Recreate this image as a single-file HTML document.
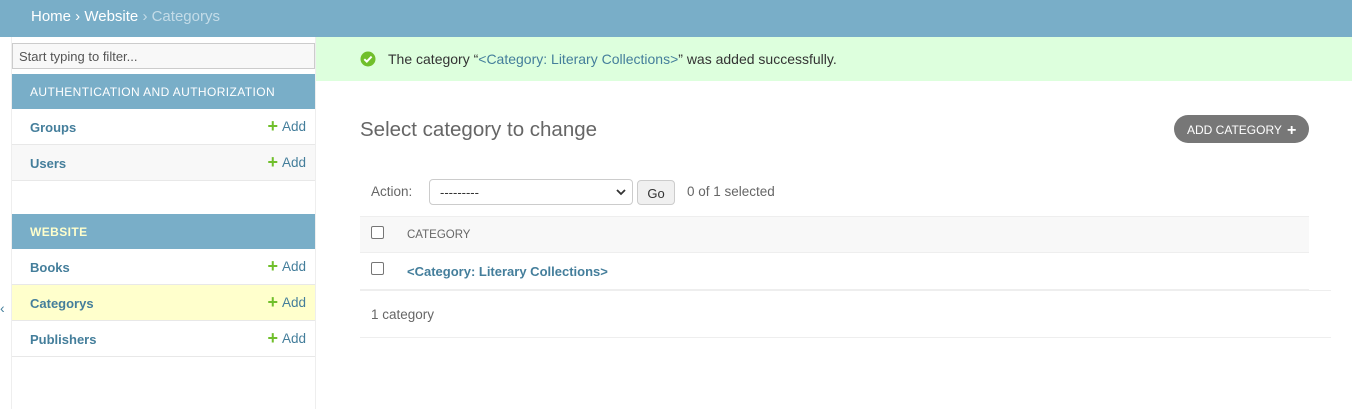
<!DOCTYPE html>
<html><head><style>
*{box-sizing:border-box;margin:0;padding:0}
body{width:1352px;height:409px;overflow:hidden;background:#fff;font-family:"Liberation Sans",sans-serif;font-size:13px;color:#333;position:relative}
.a{position:absolute}
.hdr{left:0;top:0;width:1352px;height:37px;background:#79aec8;color:#fff;font-size:15px;padding:8px 0 0 31px}
.hdr .s{color:#c4dce8}
.side{left:11px;top:37px;width:305px;height:372px;border-left:1px solid #eee;border-right:1px solid #eee}
.cap{left:12px;width:303px;height:35px;background:#79aec8;color:#fff;font-size:12px;padding:11px 0 0 18px;letter-spacing:.4px}
.row{left:12px;width:303px;height:36px;border-bottom:1px solid #e8e8e8;padding:11px 0 0 18px;color:#447e9b;font-weight:bold;font-size:13px}
.row .ad{position:absolute;right:9px;top:10px;font-weight:normal;color:#447e9b;font-size:13.5px}
.row .ad b{color:#70bf2b;font-size:18px;margin-right:4px;vertical-align:-1px;line-height:10px}
.cb{width:13px;height:13px;border:1px solid #767676;border-radius:2px;background:#fff}
</style></head><body>
<div class="a hdr">Home › Website <span class="s">› Categorys</span></div>
<div class="a side"></div>
<div class="a" style="left:12px;top:43px;width:303px;height:26px;border:1px solid #ccc;background:#f8f8f8;color:#555;padding:5px 0 0 6px;font-size:13px">Start typing to filter...</div>
<div class="a cap" style="top:74px">AUTHENTICATION AND AUTHORIZATION</div>
<div class="a row" style="top:109px">Groups<span class="ad"><b>+</b>Add</span></div>
<div class="a row" style="top:145px;background:#f8f8f8">Users<span class="ad"><b>+</b>Add</span></div>
<div class="a cap" style="top:214px;color:#ffc;font-weight:bold">WEBSITE</div>
<div class="a row" style="top:249px">Books<span class="ad"><b>+</b>Add</span></div>
<div class="a row" style="top:285px;background:#ffc">Categorys<span class="ad"><b>+</b>Add</span></div>
<div class="a row" style="top:321px">Publishers<span class="ad"><b>+</b>Add</span></div>
<div class="a" style="left:0;top:300px;color:#447e9b;font-size:14px">‹</div>
<div class="a" style="left:316px;top:37px;width:1036px;height:44px;background:#dfd;padding:14px 0 0 72px;font-size:14px">The category “<span style="color:#447e9b">&lt;Category: Literary Collections&gt;</span>” was added successfully.</div>
<svg class="a" style="left:360px;top:51px" width="16" height="16" viewBox="0 0 16 16"><circle cx="8" cy="8" r="7.5" fill="#70bf2b"/><path d="M4.3 8.2l2.5 2.4 4.8-5" stroke="#fff" stroke-width="2" fill="none"/></svg>
<div class="a" style="left:360px;top:118px;font-size:20.5px;color:#666">Select category to change</div>
<div class="a" style="left:1174px;top:115px;width:135px;height:28px;border-radius:14px;background:#777;color:#fff;font-size:12px;padding:8px 0 0 13px">ADD CATEGORY <b style="font-size:16px;margin-left:2px;line-height:10px;vertical-align:-1px">+</b></div>
<div class="a" style="left:371px;top:184px;color:#666;font-size:13.5px">Action:</div>
<div class="a" style="left:429px;top:179px;width:204px;height:26px;border:1px solid #ccc;border-radius:4px;padding:5px 0 0 10px;color:#333">---------<svg style="position:absolute;right:6px;top:9px" width="10" height="7" viewBox="0 0 10 7"><path d="M1 1l4 4 4-4" stroke="#333" stroke-width="1.8" fill="none"/></svg></div>
<div class="a" style="left:637px;top:180px;width:38px;height:25px;border:1px solid #ccc;border-radius:4px;background:#f0f0f0;text-align:center;padding-top:5px">Go</div>
<div class="a" style="left:687px;top:184px;color:#666;font-size:13.5px">0 of 1 selected</div>
<div class="a" style="left:360px;top:216px;width:949px;height:37px;background:#f8f8f8;border-top:1px solid #eee;border-bottom:1px solid #eee"></div>
<div class="a cb" style="left:371px;top:226px"></div>
<div class="a" style="left:407px;top:229px;font-size:11.5px;color:#666">CATEGORY</div>
<div class="a cb" style="left:371px;top:262px"></div>
<div class="a" style="left:407px;top:264px;color:#447e9b;font-weight:bold">&lt;Category: Literary Collections&gt;</div>
<div class="a" style="left:360px;top:289px;width:949px;height:1px;background:#eee"></div>
<div class="a" style="left:360px;top:290px;width:971px;height:1px;background:#eee"></div>
<div class="a" style="left:371px;top:307px;color:#666;font-size:13.5px">1 category</div>
<div class="a" style="left:360px;top:337px;width:971px;height:1px;background:#eee"></div>
</body></html>
